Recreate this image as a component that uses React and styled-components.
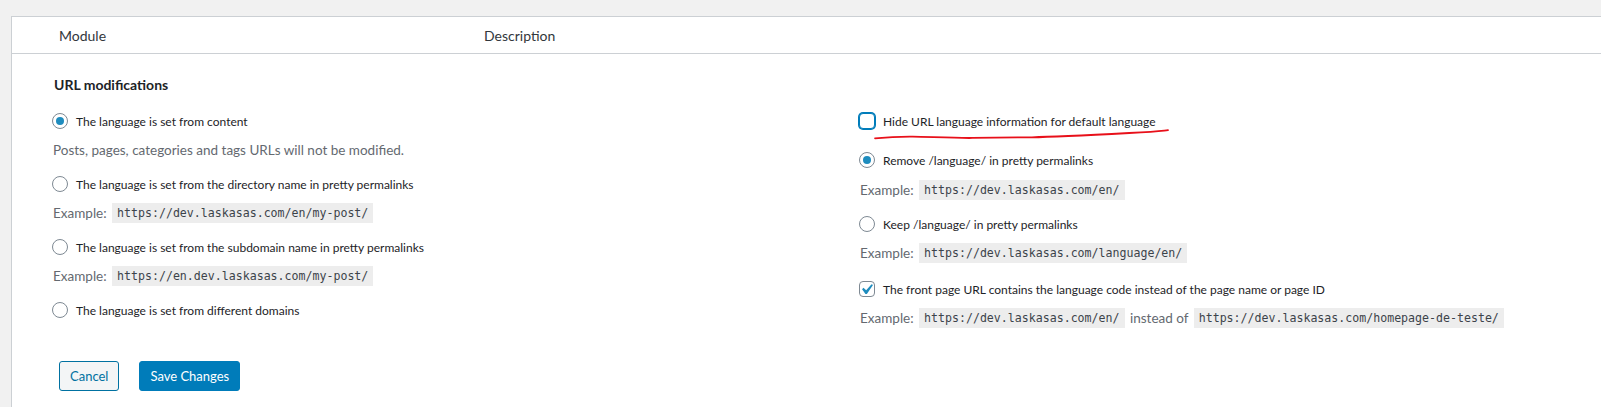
import React from "react";
import styled, { createGlobalStyle } from "styled-components";

const GlobalStyle = createGlobalStyle`
  html, body {
    margin: 0;
    padding: 0;
    background: #f1f1f1;
    overflow: hidden;
  }
  body {
    font-family: Lato, "Noto Sans", sans-serif;
    color: #32373c;
  }
`;

export default function App() {
  return (
    <>
      <GlobalStyle />
      <Screen>
        <Panel>
          <HeadRow>
            <HeadCell $width={472} $pad={47}>Module</HeadCell>
            <HeadCell>Description</HeadCell>
          </HeadRow>

          <Settings>
            <SectionTitle>URL modifications</SectionTitle>
            <Columns>
              {/* left column: how the language is read */}
              <Column>
                <Option $gap={0}>
                  <Radio $checked />
                  The language is set from content
                </Option>
                <Note>Posts, pages, categories and tags URLs will not be modified.</Note>

                <Option>
                  <Radio />
                  The language is set from the directory name in pretty permalinks
                </Option>
                <Note>
                  Example: <Code>https://dev.laskasas.com/en/my-post/</Code>
                </Note>

                <Option>
                  <Radio />
                  The language is set from the subdomain name in pretty permalinks
                </Option>
                <Note>
                  Example: <Code>https://en.dev.laskasas.com/my-post/</Code>
                </Note>

                <Option>
                  <Radio />
                  The language is set from different domains
                </Option>
              </Column>

              {/* right column: url options */}
              <Column>
                <Option $gap={0}>
                  <Checkbox $focus />
                  Hide URL language information for default language
                  <Scribble viewBox="0 0 300 12" width="298" height="12">
                    <path
                      d="M2 10.3 C 14 9.2, 26 8.6, 40 8.7 S 80 10.2, 100 10 S 140 9.6, 160 9.3 S 228 6.6, 258 5 S 288 3.1, 297 2.2"
                      fill="none"
                      stroke="#e8101a"
                      strokeWidth="1.8"
                      strokeLinecap="round"
                    />
                  </Scribble>
                </Option>

                <Option $gap={19}>
                  <Radio $checked />
                  Remove /language/ in pretty permalinks
                </Option>
                <Note $gap={10}>
                  Example: <Code>https://dev.laskasas.com/en/</Code>
                </Note>

                <Option>
                  <Radio />
                  Keep /language/ in pretty permalinks
                </Option>
                <Note>
                  Example: <Code>https://dev.laskasas.com/language/en/</Code>
                </Note>

                <Option $gap={16}>
                  <Checkbox $checked>
                    <CheckMark viewBox="0 0 20 20">
                      <path d="M14.83 4.89l1.34.94-5.81 8.38H9.02L5.78 9.67l1.34-1.25 2.57 2.4z" />
                    </CheckMark>
                  </Checkbox>
                  The front page URL contains the language code instead of the page name or page ID
                </Option>
                <Note>
                  Example: <Code>https://dev.laskasas.com/en/</Code> instead of{" "}
                  <Code>https://dev.laskasas.com/homepage-de-teste/</Code>
                </Note>
              </Column>
            </Columns>

            <Actions>
              <Button>Cancel</Button>
              <Button $primary>Save Changes</Button>
            </Actions>
          </Settings>
        </Panel>
      </Screen>
    </>
  );
}

const Screen = styled.div`
  box-sizing: border-box;
  height: 100vh;
  padding: 16px 0 0 11px;
`;

const Panel = styled.div`
  height: 100%;
  background: #fff;
  border-top: 1px solid #ccd0d4;
  border-left: 1px solid #ccd0d4;
`;

const HeadRow = styled.div`
  display: flex;
  align-items: center;
  height: 36px;
  border-bottom: 1px solid #ccd0d4;
  font-size: 14px;
  color: #32373c;
`;

const HeadCell = styled.div`
  box-sizing: border-box;
  flex: 0 0 ${(p) => (p.$width ? `${p.$width}px` : "auto")};
  padding-left: ${(p) => p.$pad || 0}px;
`;

const Settings = styled.div`
  padding: 21px 0 0 40px;
`;

const SectionTitle = styled.h4`
  margin: 0;
  padding-left: 2px;
  font-size: 14px;
  font-weight: 700;
  line-height: 20px;
  color: #1d2327;
`;

const Columns = styled.div`
  display: grid;
  grid-template-columns: 807px 1fr;
  margin-top: 16px;
`;

const Column = styled.div`
  display: flex;
  flex-direction: column;
  align-items: flex-start;
`;

const Option = styled.label`
  position: relative;
  display: flex;
  align-items: center;
  gap: 8px;
  height: 20px;
  margin-top: ${(p) => (p.$gap ?? 14)}px;
  font-size: 12px;
  color: #1d2327;
  white-space: nowrap;
`;

const Radio = styled.span`
  box-sizing: border-box;
  display: grid;
  place-items: center;
  flex: none;
  width: 16px;
  height: 16px;
  border: 1px solid #7e8993;
  border-radius: 50%;
  background: #fff;
  &::before {
    content: "";
    display: ${(p) => (p.$checked ? "block" : "none")};
    width: 8px;
    height: 8px;
    border-radius: 50%;
    background: #1e8cbe;
  }
`;

const Checkbox = styled.span`
  box-sizing: border-box;
  display: block;
  flex: none;
  width: 16px;
  height: 16px;
  border: 1px solid ${(p) => (p.$focus ? "#007cba" : "#7e8993")};
  border-radius: 4px;
  background: #fff;
  box-shadow: ${(p) => (p.$focus ? "0 0 0 1px #007cba" : "none")};
`;

const CheckMark = styled.svg`
  display: block;
  width: 21px;
  height: 21px;
  margin: -3px 0 0 -4px;
  fill: #1e8cbe;
`;

const Scribble = styled.svg`
  position: absolute;
  left: 14px;
  top: 17px;
  pointer-events: none;
`;

const Note = styled.p`
  height: 20px;
  margin: ${(p) => (p.$gap ?? 9)}px 0 0;
  padding-left: 1px;
  font-size: 13.5px;
  line-height: 20px;
  color: #646970;
  white-space: pre;
`;

const Code = styled.code`
  display: inline-block;
  vertical-align: top;
  margin: 0 2px;
  padding: 1px 5px;
  line-height: 18px;
  font-family: "DejaVu Sans Mono", "Liberation Mono", monospace;
  font-size: 11.6px;
  color: #3c434a;
  background: rgba(0, 0, 0, 0.07);
`;

const Actions = styled.div`
  display: flex;
  gap: 20px;
  margin: 33px 0 0 7px;
`;

const Button = styled.button`
  box-sizing: border-box;
  height: 30px;
  padding: 0 10px;
  font-family: Lato, "Noto Sans", sans-serif;
  font-size: 13px;
  line-height: 28px;
  border-radius: 3px;
  border: 1px solid ${(p) => (p.$primary ? "#007cba" : "#0071a1")};
  background: ${(p) => (p.$primary ? "#007cba" : "#f3f5f6")};
  color: ${(p) => (p.$primary ? "#fff" : "#0071a1")};
  cursor: pointer;
`;
